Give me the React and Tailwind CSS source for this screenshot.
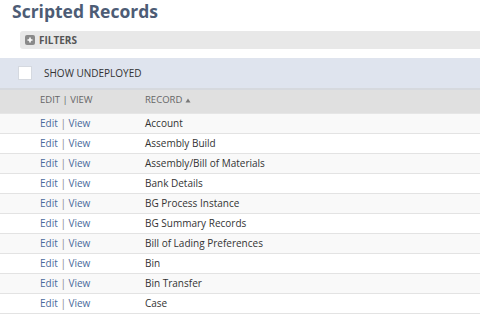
const records = [
  'Account',
  'Assembly Build',
  'Assembly/Bill of Materials',
  'Bank Details',
  'BG Process Instance',
  'BG Summary Records',
  'Bill of Lading Preferences',
  'Bin',
  'Bin Transfer',
  'Case',
];

export default function App() {
  return (
    <div className="w-[480px] h-[317px] overflow-hidden bg-white font-['Open_Sans',sans-serif]">
      {/* Title */}
      <h1 className="pl-[12px] leading-[22px] pb-[2px] text-[17.5px] font-bold text-[#4d5c75]">
        Scripted Records
      </h1>

      {/* Filters bar */}
      <div className="mt-[7px] ml-[20px] h-[18px] flex items-center gap-[4px] pl-[5px] bg-[#e8e8e8] rounded-l-[3px]">
        <span className="w-[10px] h-[10px] rounded-[2px] bg-[#8a8a8a] flex items-center justify-center">
          <svg width="8" height="8" viewBox="0 0 8 8">
            <path d="M4 1.5v5M1.5 4h5" stroke="#fff" strokeWidth="1.6" />
          </svg>
        </span>
        <span className="text-[10px] font-bold text-[#555]">FILTERS</span>
      </div>

      {/* Show undeployed */}
      <div className="mt-[9px] h-[32px] bg-[#dfe4ee] flex items-center pl-[18px] border-b-[2px] border-[#d6d9de]">
        <span className="w-[14px] h-[14px] bg-white border border-[#d5d9e0]" />
        <span className="ml-[12px] text-[10px] text-[#333]">SHOW UNDEPLOYED</span>
      </div>

      {/* Table header */}
      <div className="h-[24px] bg-[#e0e0e0] flex items-center pb-[3px] text-[9.5px] text-[#666] border-b border-[#e6e6e6]">
        <span className="pl-[40px] w-[145px]">EDIT | VIEW</span>
        <span className="flex items-center gap-[3px]">
          RECORD
          <svg width="6" height="5" viewBox="0 0 6 5">
            <path d="M3 0.5L5.5 4.5H0.5Z" fill="#777" />
          </svg>
        </span>
      </div>

      {/* Rows */}
      {records.map((r, i) => (
        <div
          key={r}
          className={`h-[20px] flex items-center border-b border-[#e3e3e3] text-[10px] ${
            i % 2 === 0 ? 'bg-[#f9f9f9]' : 'bg-white'
          }`}
        >
          <span className="pl-[40px] w-[145px] text-[#4a6a9c]">
            Edit <span className="text-[#888]">|</span> View
          </span>
          <span className="text-[#333]">{r}</span>
        </div>
      ))}
    </div>
  );
}
